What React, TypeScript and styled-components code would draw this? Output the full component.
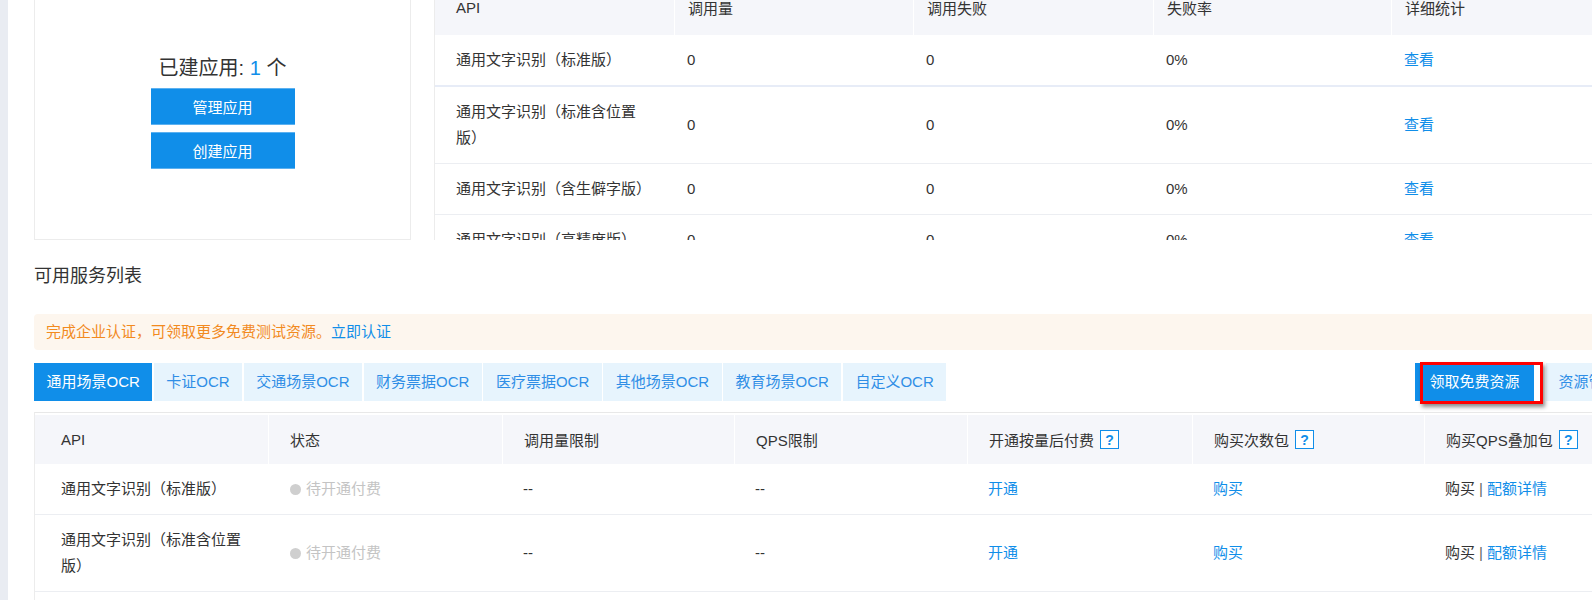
import React from 'react';
import styled, { createGlobalStyle } from 'styled-components';

const GlobalStyle = createGlobalStyle`
    *, *::before, *::after {
        box-sizing: border-box;
    }

    html, body {
        margin: 0;
        padding: 0;
        overflow: hidden;
        background: #fff;
    }

    body {
        font-family: "Liberation Sans", "Noto Sans CJK SC", sans-serif;
        color: #333;
    }
`;

const BLUE = '#108ee9';

const Page = styled.div`
    display: flex;
    width: 1592px;
    height: 600px;
    overflow: hidden;
    background: #fff;
`;

const Strip = styled.div`
    flex: none;
    width: 8px;
    background: #e9ecf2;
`;

const Main = styled.div`
    flex: none;
    width: 1623px;
    padding-left: 26px;
    margin-top: -20px;
`;

const TopSection = styled.div`
    display: flex;
    gap: 23px;
    height: 260px;
`;

const AppCard = styled.div`
    flex: none;
    width: 377px;
    height: 100%;
    border: 1px solid #ececec;
    padding-top: 5px;
    display: flex;
    flex-direction: column;
    align-items: center;
    justify-content: center;
`;

const AppCount = styled.div`
    font-size: 20px;
    line-height: 24px;
    color: #333;

    span {
        color: ${BLUE};
    }
`;

const CardButton = styled.button`
    width: 144px;
    height: 37px;
    margin-top: ${(p: { $gap: number }) => p.$gap}px;
    border: none;
    border-top: 1px solid #5cb1f0;
    border-bottom: 1px solid #5cb1f0;
    background: ${BLUE};
    color: #fff;
    font-family: inherit;
    font-size: 15px;
    cursor: pointer;
`;

const StatTable = styled.div`
    flex: none;
    width: 1197px;
    height: 100%;
    border-left: 1px solid #ececec;
    overflow: hidden;
`;

const statCols = '239px 239px 240px 238px 240px';
const serviceCols = '233px 234px 232px 233px 225px 232px 1fr';

const HeadRow = styled.div<{ $cols: string; $height: number }>`
    display: grid;
    grid-template-columns: ${(p) => p.$cols};
    height: ${(p) => p.$height}px;
    background: #f5f6fa;
`;

const HeadCell = styled.div<{ $pl: number }>`
    display: flex;
    align-items: center;
    padding-left: ${(p) => p.$pl}px;
    font-size: 15px;
    color: #333;
    white-space: nowrap;

    & + & {
        border-left: 1px solid #fff;
    }
`;

const BodyRow = styled.div<{ $cols: string; $strong?: boolean }>`
    display: grid;
    grid-template-columns: ${(p) => p.$cols};
    border-bottom: ${(p) => (p.$strong ? '2px solid #e7ecf7' : '1px solid #eceef2')};
`;

const BodyCell = styled.div<{ $pl: number; $pr?: number }>`
    display: flex;
    align-items: center;
    padding: 12px ${(p) => p.$pr ?? 13}px 12px ${(p) => p.$pl}px;
    font-size: 15px;
    line-height: 26px;
    color: #333;
`;

const Link = styled.a`
    color: ${BLUE};
    text-decoration: none;
    cursor: pointer;
`;

const SectionTitle = styled.div`
    margin-top: 24px;
    font-size: 18px;
    line-height: 24px;
    color: #333;
`;

const Notice = styled.div`
    margin-top: 26px;
    height: 36px;
    line-height: 36px;
    padding: 0 12px;
    background: #fdf6ee;
    border-radius: 4px;
    font-size: 15px;
    color: #f28a1e;
`;

const TabBar = styled.div`
    margin-top: 13px;
    display: flex;
    justify-content: space-between;
    width: 1597px;
`;

const TabGroup = styled.div`
    display: flex;
    gap: ${(p: { $gap: number }) => p.$gap}px;
`;

const Tab = styled.div<{ $active?: boolean }>`
    height: 38px;
    line-height: 38px;
    padding: 0 12.5px;
    font-size: 15px;
    white-space: nowrap;
    background: ${(p) => (p.$active ? BLUE : '#e7f4fd')};
    color: ${(p) => (p.$active ? '#fff' : '#2f8ee6')};
    cursor: pointer;
`;

const FreeButtonWrap = styled.div`
    position: relative;
`;

const FreeButton = styled.div`
    height: 38px;
    line-height: 38px;
    padding: 0 14.5px;
    font-size: 15px;
    background: ${BLUE};
    color: #fff;
    cursor: pointer;
`;

const Highlight = styled.div`
    position: absolute;
    left: 5px;
    top: -1px;
    width: 123px;
    height: 42px;
    border: 3px solid #f00;
    box-shadow: 2px 3px 4px rgba(0, 0, 0, 0.45);
    pointer-events: none;
`;

const ServiceTable = styled.div`
    margin-top: 11px;
    width: 1597px;
    border-top: 1px solid #e8e8e8;
    border-left: 1px solid #ececec;
    padding-top: 2px;
`;

const Help = styled.span`
    display: inline-flex;
    align-items: center;
    justify-content: center;
    width: 19px;
    height: 19px;
    margin-left: 6px;
    border: 1px solid ${BLUE};
    background: #fff;
    color: ${BLUE};
    font-size: 14px;
    font-weight: bold;
`;

const Status = styled.span`
    display: inline-flex;
    align-items: center;
    color: #c4c4c4;

    &::before {
        content: '';
        width: 11px;
        height: 11px;
        margin-right: 5px;
        border-radius: 50%;
        background: #cfcfcf;
    }
`;

const Divider = styled.span`
    margin: 0 4px;
    color: #666;
`;

const statHeads = ['API', '调用量', '调用失败', '失败率', '详细统计'];
const statRows = ['通用文字识别（标准版）', '通用文字识别（标准含位置版）', '通用文字识别（含生僻字版）', '通用文字识别（高精度版）'];

const tabs = ['通用场景OCR', '卡证OCR', '交通场景OCR', '财务票据OCR', '医疗票据OCR', '其他场景OCR', '教育场景OCR', '自定义OCR'];

const serviceHeads: Array<{ label: string; help?: boolean }> = [
    { label: 'API' },
    { label: '状态' },
    { label: '调用量限制' },
    { label: 'QPS限制' },
    { label: '开通按量后付费', help: true },
    { label: '购买次数包', help: true },
    { label: '购买QPS叠加包', help: true },
];

const serviceRows = ['通用文字识别（标准版）', '通用文字识别（标准含位置版）', '通用文字识别（含生僻字版）'];

export default function App() {
    return (
        <Page>
            <GlobalStyle />
            <Strip />
            <Main>
                <TopSection>
                    <AppCard>
                        <AppCount>
                            已建应用: <span>1</span> 个
                        </AppCount>
                        <CardButton $gap={8}>管理应用</CardButton>
                        <CardButton $gap={7}>创建应用</CardButton>
                    </AppCard>

                    <StatTable>
                        <HeadRow $cols={statCols} $height={55}>
                            {statHeads.map((h, i) => (
                                <HeadCell key={h} $pl={i === 0 ? 21 : 13}>
                                    {h}
                                </HeadCell>
                            ))}
                        </HeadRow>
                        {statRows.map((name, i) => (
                            <BodyRow key={name} $cols={statCols} $strong={i === 0}>
                                <BodyCell $pl={21} $pr={30}>
                                    {name}
                                </BodyCell>
                                <BodyCell $pl={13}>0</BodyCell>
                                <BodyCell $pl={13}>0</BodyCell>
                                <BodyCell $pl={13}>0%</BodyCell>
                                <BodyCell $pl={13}>
                                    <Link>查看</Link>
                                </BodyCell>
                            </BodyRow>
                        ))}
                    </StatTable>
                </TopSection>

                <SectionTitle>可用服务列表</SectionTitle>

                <Notice>
                    完成企业认证，可领取更多免费测试资源。<Link>立即认证</Link>
                </Notice>

                <TabBar>
                    <TabGroup $gap={1.5}>
                        {tabs.map((t, i) => (
                            <Tab key={t} $active={i === 0}>
                                {t}
                            </Tab>
                        ))}
                    </TabGroup>
                    <TabGroup $gap={12}>
                        <FreeButtonWrap>
                            <FreeButton>领取免费资源</FreeButton>
                            <Highlight />
                        </FreeButtonWrap>
                        <Tab>资源管理</Tab>
                    </TabGroup>
                </TabBar>

                <ServiceTable>
                    <HeadRow $cols={serviceCols} $height={49}>
                        {serviceHeads.map((h, i) => (
                            <HeadCell key={h.label} $pl={i === 0 ? 26 : 21}>
                                {h.label}
                                {h.help && <Help>?</Help>}
                            </HeadCell>
                        ))}
                    </HeadRow>
                    {serviceRows.map((name) => (
                        <BodyRow key={name} $cols={serviceCols}>
                            <BodyCell $pl={26} $pr={18}>
                                {name}
                            </BodyCell>
                            <BodyCell $pl={22}>
                                <Status>待开通付费</Status>
                            </BodyCell>
                            <BodyCell $pl={21}>--</BodyCell>
                            <BodyCell $pl={21}>--</BodyCell>
                            <BodyCell $pl={21}>
                                <Link>开通</Link>
                            </BodyCell>
                            <BodyCell $pl={21}>
                                <Link>购买</Link>
                            </BodyCell>
                            <BodyCell $pl={21}>
                                购买<Divider>|</Divider>
                                <Link>配额详情</Link>
                            </BodyCell>
                        </BodyRow>
                    ))}
                </ServiceTable>
            </Main>
        </Page>
    );
}
